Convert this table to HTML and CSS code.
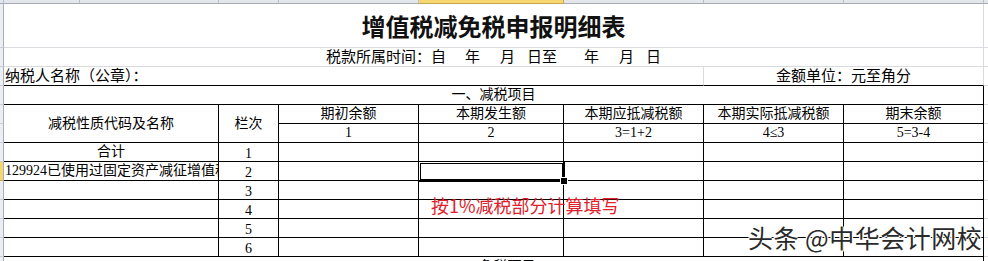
FILE: index.html
```html
<!DOCTYPE html>
<html lang="zh-CN">
<head>
<meta charset="utf-8">
<title>增值税减免税申报明细表</title>
<link rel="stylesheet" href="styles.css">
</head>
<body>
<div class="sheet">
  <!-- column headers -->
  <div class="hd corner"></div>
  <div class="hd"></div><div class="hd"></div><div class="hd"></div><div class="hd"></div>
  <div class="hd on"></div><div class="hd"></div><div class="hd"></div><div class="hd"></div>
  <div class="hd last"></div>

  <!-- title -->
  <div class="rh"></div>
  <div class="cell g span8 title">增值税减免税申报明细表</div>
  <div class="cell g end"></div>

  <!-- period -->
  <div class="rh"></div>
  <div class="cell g span8 period">税款所属时间：自<span class="w1">年</span><span class="w2">月</span><span class="w3">日至</span><span class="w4">年</span><span class="w2">月</span><span class="w5">日</span></div>
  <div class="cell g end"></div>

  <!-- taxpayer -->
  <div class="rh"></div>
  <div class="cell gb span6 left big">纳税人名称（公章）：</div>
  <div class="cell gb span2 big">金额单位：元至角分</div>
  <div class="cell g end"></div>

  <!-- section -->
  <div class="rh"></div>
  <div class="cell c span8">一、减税项目</div>
  <div class="cell g end"></div>

  <!-- header -->
  <div class="rh"></div>
  <div class="cell c span2 rows2">减税性质代码及名称</div>
  <div class="cell c rows2">栏次</div>
  <div class="cell c">期初余额</div>
  <div class="cell c">本期发生额</div>
  <div class="cell c">本期应抵减税额</div>
  <div class="cell c">本期实际抵减税额</div>
  <div class="cell c">期末余额</div>
  <div class="cell g end"></div>

  <div class="rh"></div>
  <div class="cell c">1</div>
  <div class="cell c">2</div>
  <div class="cell c">3=1+2</div>
  <div class="cell c">4≤3</div>
  <div class="cell c">5=3-4</div>
  <div class="cell g end"></div>

  <!-- data rows -->
  <div class="rh"></div>
  <div class="cell c span2">合计</div>
  <div class="cell c num">1</div>
  <div class="cell c"></div><div class="cell c"></div><div class="cell c"></div><div class="cell c"></div><div class="cell c"></div>
  <div class="cell g end"></div>

  <div class="rh on"></div>
  <div class="cell c span2 left">129924已使用过固定资产减征增值税</div>
  <div class="cell c num">2</div>
  <div class="cell c"></div><div class="cell c sel"></div><div class="cell c"></div><div class="cell c"></div><div class="cell c"></div>
  <div class="cell g end"></div>

  <div class="rh"></div>
  <div class="cell c span2"></div>
  <div class="cell c num">3</div>
  <div class="cell c"></div><div class="cell c"></div><div class="cell c"></div><div class="cell c"></div><div class="cell c"></div>
  <div class="cell g end"></div>

  <div class="rh"></div>
  <div class="cell c span2"></div>
  <div class="cell c num">4</div>
  <div class="cell c"></div><div class="cell c"></div><div class="cell c"></div><div class="cell c"></div><div class="cell c"></div>
  <div class="cell g end"></div>

  <div class="rh"></div>
  <div class="cell c span2"></div>
  <div class="cell c num">5</div>
  <div class="cell c"></div><div class="cell c"></div><div class="cell c"></div><div class="cell c"></div><div class="cell c"></div>
  <div class="cell g end"></div>

  <div class="rh"></div>
  <div class="cell c span2"></div>
  <div class="cell c num">6</div>
  <div class="cell c"></div><div class="cell c"></div><div class="cell c"></div><div class="cell c"></div><div class="cell c"></div>
  <div class="cell g end"></div>

  <div class="rh"></div>
  <div class="cell c span8 low">二、免税项目</div>
  <div class="cell g end"></div>

  <!-- floating text box and watermark -->
  <div class="note">按1%减税部分计算填写</div>
  <div class="mark">头条 @中华会计网校</div>
</div>
</body>
</html>
```

FILE: styles.css
```css
* { box-sizing: border-box; margin: 0; padding: 0; }
html, body { width: 988px; height: 261px; overflow: hidden; background: #fff; }
body {
  font-family: "Liberation Serif", "Noto Sans CJK SC", serif;
  font-size: 14px;
  color: #000;
}

.sheet {
  position: relative;
  display: grid;
  grid-template-columns: 4px 76px 139px 60px 140px 145px 140px 140px 140px 4px;
  grid-template-rows: 4px 44px repeat(13, 19px);
}

/* column header strip */
.hd {
  background: #e3e6eb;
  border-right: 1px solid #b9c0ca;
  border-bottom: 1px solid #a3acb8;
}
.hd.on { background: #f6d671; border-right-color: #c9a74c; border-bottom-color: #c9a74c; }
.hd.last { border-right: none; }

/* row header strip */
.rh {
  background: #eceef2;
  border-right: 1px solid #a7afbb;
  border-bottom: 1px solid #c9ced6;
}
.rh.on { background: #f6d671; border-bottom-color: #c9a74c; }

.cell {
  display: flex;
  align-items: center;
  justify-content: center;
  white-space: nowrap;
  overflow: hidden;
  line-height: 18px;
}

.g { border-right: 1px solid #d8dbe0; border-bottom: 1px solid #d8dbe0; }
.gb { border-right: 1px solid #d8dbe0; border-bottom: 1px solid #000; }
.c { border-right: 1px solid #000; border-bottom: 1px solid #000; }
.end { border-right: none; }

.span2 { grid-column: span 2; }
.span6 { grid-column: span 6; }
.span8 { grid-column: span 8; }
.rows2 { grid-row: span 2; }

.left { justify-content: flex-start; padding-left: 1px; }
.big { font-size: 15px; align-items: flex-end; }
.num { padding-top: 3px; }
.low { align-items: flex-start; padding-top: 1px; }

.title {
  font-family: "Noto Sans CJK SC", sans-serif;
  font-size: 24px;
  font-weight: 700;
  line-height: 30px;
  color: #111;
}

.period { font-size: 15px; }
.period span { display: inline-block; }
.w1 { margin-left: 19px; }
.w2 { margin-left: 20px; }
.w3 { margin-left: 12px; }
.w4 { margin-left: 27px; }
.w5 { margin-left: 12px; }

/* selected cell */
.sel { position: relative; overflow: visible; }
.sel::after {
  content: "";
  position: absolute;
  left: -1px; top: -1px; right: -2px; bottom: -2px;
  border: 3px double #000;
  pointer-events: none;
}
.sel::before {
  content: "";
  position: absolute;
  right: -5px; bottom: -5px;
  width: 6px; height: 6px;
  background: #000;
  border: 1px solid #fff;
  z-index: 2;
}

.note {
  position: absolute;
  left: 431px;
  top: 195px;
  font-family: "Noto Sans CJK SC", sans-serif;
  font-size: 18px;
  line-height: 20px;
  color: #e2202c;
  white-space: nowrap;
}

.mark {
  position: absolute;
  left: 748px;
  top: 222px;
  font-family: "Noto Sans CJK SC", sans-serif;
  font-size: 25px;
  line-height: 30px;
  letter-spacing: 0.5px;
  color: #2a2a2a;
  white-space: nowrap;
  text-shadow: 1px 0 0 #fff, -1px 0 0 #fff, 0 1px 0 #fff, 0 -1px 0 #fff, 1px 1px 0 #fff, -1px -1px 0 #fff;
}
```
